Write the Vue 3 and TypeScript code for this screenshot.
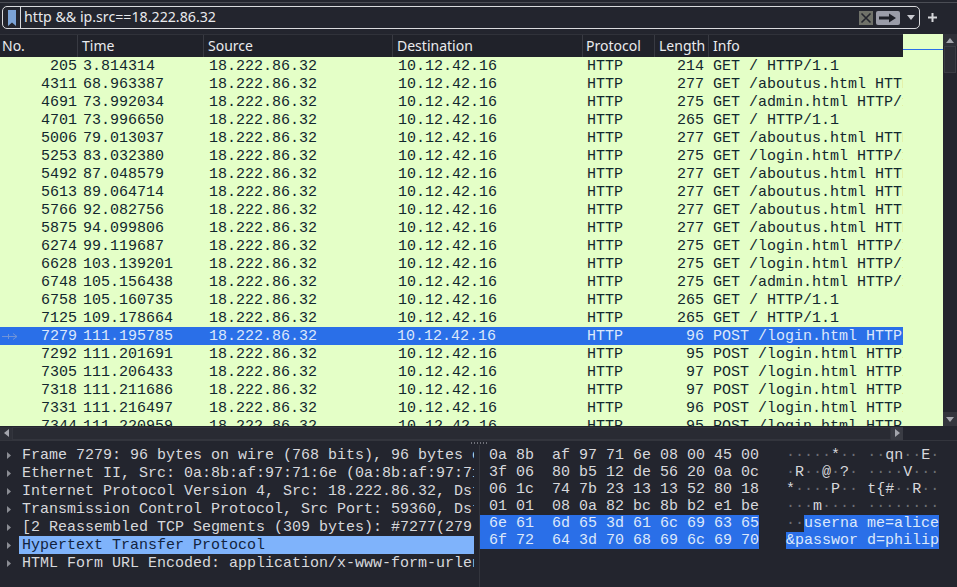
<script setup lang="ts">
interface Packet { no: number; time: string; len: number; info: string }
const about = 'GET /aboutus.html HTTP/1.1'
const admin = 'GET /admin.html HTTP/1.1'
const root = 'GET / HTTP/1.1'
const login = 'GET /login.html HTTP/1.1'
const post = 'POST /login.html HTTP/1.1'
const packets: Packet[] = [
  { no: 205, time: '3.814314', len: 214, info: root },
  { no: 4311, time: '68.963387', len: 277, info: about },
  { no: 4691, time: '73.992034', len: 275, info: admin },
  { no: 4701, time: '73.996650', len: 265, info: root },
  { no: 5006, time: '79.013037', len: 277, info: about },
  { no: 5253, time: '83.032380', len: 275, info: login },
  { no: 5492, time: '87.048579', len: 277, info: about },
  { no: 5613, time: '89.064714', len: 277, info: about },
  { no: 5766, time: '92.082756', len: 277, info: about },
  { no: 5875, time: '94.099806', len: 277, info: about },
  { no: 6274, time: '99.119687', len: 275, info: login },
  { no: 6628, time: '103.139201', len: 275, info: login },
  { no: 6748, time: '105.156438', len: 275, info: admin },
  { no: 6758, time: '105.160735', len: 265, info: root },
  { no: 7125, time: '109.178664', len: 265, info: root },
  { no: 7279, time: '111.195785', len: 96, info: post },
  { no: 7292, time: '111.201691', len: 95, info: post },
  { no: 7305, time: '111.206433', len: 97, info: post },
  { no: 7318, time: '111.211686', len: 97, info: post },
  { no: 7331, time: '111.216497', len: 96, info: post },
  { no: 7344, time: '111.220959', len: 95, info: post },
]
const details = [
  'Frame 7279: 96 bytes on wire (768 bits), 96 bytes captured',
  'Ethernet II, Src: 0a:8b:af:97:71:6e (0a:8b:af:97:71:6e), Dst',
  'Internet Protocol Version 4, Src: 18.222.86.32, Dst: 10.12.42.16',
  'Transmission Control Protocol, Src Port: 59360, Dst Port: 80',
  '[2 Reassembled TCP Segments (309 bytes): #7277(279), #7279(30)]',
  'Hypertext Transfer Protocol',
  'HTML Form URL Encoded: application/x-www-form-urlencoded',
]
interface HexRow { hex: string; plain: string; marked: string; sel: boolean }
const hexRows: HexRow[] = [
  { hex: '0a 8b  af 97 71 6e 08 00 45 00', plain: '·····*·· ··qn··E·', marked: '', sel: false },
  { hex: '3f 06  80 b5 12 de 56 20 0a 0c', plain: '·R··@·?· ····V···', marked: '', sel: false },
  { hex: '06 1c  74 7b 23 13 13 52 80 18', plain: '*····P·· t{#··R··', marked: '', sel: false },
  { hex: '01 01  08 0a 82 bc 8b b2 e1 be', plain: '···m···· ········', marked: '', sel: false },
  { hex: '6e 61  6d 65 3d 61 6c 69 63 65', plain: '··', marked: 'userna me=alice', sel: true },
  { hex: '6f 72  64 3d 70 68 69 6c 69 70', plain: '', marked: '&passwor d=philip', sel: true },
]
const chars = (s: string): string[] => Array.from(s)
</script>

<template>
  <div class="app">
    <div class="toolbar">
      <div class="filter">
        <svg class="bookmark" width="8" height="16" viewBox="0 0 8 16"><path d="M0 0H8V16L4 12.5L0 16Z" fill="#7ba3d6" /></svg>
        <span class="filter-text">http &amp;&amp; ip.src==18.222.86.32</span>
        <span class="clear">
          <svg width="14" height="14" viewBox="0 0 14 14"><path d="M2.5 2.5L11.5 11.5M11.5 2.5L2.5 11.5" stroke="#23252e" stroke-width="1.6" /></svg>
        </span>
        <span class="apply">
          <svg width="18" height="10" viewBox="0 0 18 10"><path d="M0 3.5H10V0.5L17 5L10 9.5V6.5H0Z" fill="#1d1f27" /></svg>
        </span>
        <svg class="drop" width="8" height="5" viewBox="0 0 8 5"><path d="M0 0H8L4 5Z" fill="#c9cad0" /></svg>
      </div>
      <svg class="plus" width="9" height="9" viewBox="0 0 9 9"><path d="M4.5 0V9M0 4.5H9" stroke="#d5d6da" stroke-width="2" /></svg>
    </div>

    <div class="list-area">
      <div class="list">
        <div class="grid head">
          <span class="hc">No.</span>
          <span class="hc">Time</span>
          <span class="hc">Source</span>
          <span class="hc">Destination</span>
          <span class="hc">Protocol</span>
          <span class="hc">Length</span>
          <span class="hc">Info</span>
        </div>
        <div class="rows">
          <div v-for="p in packets" :key="p.no" class="grid row" :class="{ selected: p.no === 7279 }">
            <svg v-if="p.no === 7279" class="mark" width="16" height="9" viewBox="0 0 16 9"><path d="M0 4.5H15M11 1.5L15 4.5L11 7.5M6.5 2V7" fill="none" stroke="#6f93d8" /></svg>
            <span class="num">{{ p.no }}</span>
            <span class="c c-time">{{ p.time }}</span>
            <span class="c">18.222.86.32</span>
            <span class="c">10.12.42.16</span>
            <span class="c">HTTP</span>
            <span class="len">{{ p.len }}</span>
            <span class="c">{{ p.info }}</span>
          </div>
        </div>
      </div>
      <div class="minimap"><div class="mini-line"></div></div>
      <div class="vscroll">
        <div class="vbtn"><svg width="8" height="5" viewBox="0 0 8 5"><path d="M0 5H8L4 0Z" fill="#a4a6ad" /></svg></div>
        <div class="vthumb"></div>
        <div class="vspace"></div>
        <div class="vbtn low"><svg width="8" height="5" viewBox="0 0 8 5"><path d="M0 0H8L4 5Z" fill="#a4a6ad" /></svg></div>
      </div>
    </div>

    <div class="hscroll">
      <div class="hbtn"><svg width="5" height="8" viewBox="0 0 5 8"><path d="M5 0V8L0 4Z" fill="#a4a6ad" /></svg></div>
      <div class="hthumb"></div>
      <div class="hbtn right"><svg width="5" height="8" viewBox="0 0 5 8"><path d="M0 0V8L5 4Z" fill="#a4a6ad" /></svg></div>
    </div>

    <div class="split-h"><span class="grip"></span></div>

    <div class="bottom">
      <div class="tree">
        <div v-for="(d, i) in details" :key="i" class="node" :class="{ on: i === 5 }">
          <svg class="tw" width="4" height="7" viewBox="0 0 4 7"><path d="M0 0V7L4 3.5Z" fill="#8b8d94" /></svg>
          <span class="node-text">{{ d }}</span>
        </div>
      </div>
      <div class="split-v"></div>
      <div class="bytes">
        <div v-for="(r, i) in hexRows" :key="i" class="hexrow">
          <span class="hex" :class="{ mark2: r.sel }">{{ r.hex }}</span>
          <span class="ascii"><template v-for="(ch, j) in chars(r.plain)" :key="j"><span :class="{ dot: ch === '·' }">{{ ch }}</span></template><span v-if="r.marked" class="mark2">{{ r.marked }}</span></span>
        </div>
      </div>
    </div>
  </div>
</template>

<style>
html, body { margin: 0; background: #23252e; }
</style>

<style scoped>
.app {
  width: 957px;
  height: 587px;
  overflow: hidden;
  background: #23252e;
  display: flex;
  flex-direction: column;
  font-family: "Liberation Mono", monospace;
  font-size: 15px;
  color: #d7d8dc;
}
.toolbar {
  box-sizing: border-box;
  flex: none;
  border-top: 1px solid #4b4d55;
  margin-top: 2px;
  height: 32px;
  padding: 3px 0 0 2px;
  display: flex;
  align-items: flex-start;
  background: #23252e;
}
.filter {
  width: 918px;
  height: 23px;
  box-sizing: border-box;
  border: 1px solid #d9dadd;
  border-radius: 5px;
  display: flex;
  align-items: center;
  padding-left: 5px;
}
.bookmark { flex: none; }
.filter-text {
  flex: 1;
  height: 100%;
  margin-left: 4px;
  padding-left: 3px;
  border-left: 1px solid #d9dadd;
  font-family: "Noto Sans", sans-serif;
  font-size: 14.2px;
  line-height: 20px;
  color: #e8e9ec;
}
.clear {
  width: 14px;
  height: 14px;
  background: #6f7169;
  display: flex;
  flex: none;
}
.apply {
  width: 24px;
  height: 14px;
  margin-left: 3px;
  background: #9a9ca8;
  border-radius: 2px;
  display: flex;
  align-items: center;
  justify-content: center;
  flex: none;
}
.drop { margin: 0 4px 0 7px; flex: none; }
.plus { margin: 7px 0 0 8px; flex: none; }
.list-area {
  height: 392px;
  flex: none;
  display: flex;
  overflow: hidden;
}
.list { width: 903px; flex: none; display: flex; flex-direction: column; overflow: hidden; }
.grid {
  display: grid;
  grid-template-columns: 78px 126px 189px 190px 72px 54px 194px;
}
.head {
  height: 23px;
  flex: none;
  background: #20222a;
  border-top: 1px solid #30323a;
  box-sizing: border-box;
  font-family: "Noto Sans", sans-serif;
  font-size: 14px;
  line-height: 22px;
  color: #eaebee;
}
.hc { padding-left: 2px; border-right: 1px solid #383a42; overflow: hidden; white-space: nowrap; }
.hc:nth-child(n+2) { padding-left: 4px; }
.hc:nth-child(5) { padding-left: 3px; }
.hc:last-child { border-right: 0; }
.rows { flex: 1; background: #e4ffc7; overflow: hidden; }
.row {
  position: relative;
  height: 18px;
  line-height: 19px;
  color: #12272e;
  white-space: pre;
}
.row.selected { background: #2a6fe8; color: #dce8fb; }
.mark { position: absolute; left: 2px; top: 5px; }
.num { text-align: right; padding-right: 1px; }
.len { text-align: right; padding-right: 5px; }
.c { padding-left: 5px; overflow: hidden; }
.c:nth-child(n+5) { padding-left: 4px; }
.minimap {
  width: 40px;
  flex: none;
  background: #e4ffc7;
  position: relative;
}
.mini-line {
  position: absolute;
  left: 0;
  right: 0;
  top: 15px;
  height: 1px;
  background: #2a6fe8;
}
.vscroll {
  width: 14px;
  flex: none;
  display: flex;
  flex-direction: column;
  background: #23252e;
}
.vbtn {
  height: 12px;
  flex: none;
  background: #2e3038;
  display: flex;
  align-items: center;
  justify-content: center;
}
.vbtn.low { height: 14px; background: #33353d; }
.vthumb { height: 27px; flex: none; margin: 0 1px; background: #2c2e36; border: 1px solid #3a3c44; box-sizing: border-box; }
.vspace { flex: 1; }
.hscroll {
  height: 14px;
  flex: none;
  display: flex;
  align-items: center;
  width: 903px;
  background: #23252e;
}
.hbtn {
  width: 12px;
  height: 13px;
  flex: none;
  background: #2e3038;
  display: flex;
  align-items: center;
  justify-content: center;
}
.hbtn.right { background: #3a3c44; }
.hthumb { flex: 1; height: 13px; background: #292b33; border: 1px solid #33353d; box-sizing: border-box; }
.split-h {
  height: 5px;
  flex: none;
  border-top: 1px solid #33353d;
  box-sizing: border-box;
  position: relative;
}
.grip {
  position: absolute;
  left: 471px;
  top: 1px;
  width: 17px;
  height: 2px;
  background: repeating-linear-gradient(90deg, #6f7179 0 1px, transparent 1px 3px);
}
.bottom { flex: 1; display: flex; min-height: 0; }
.tree { width: 474px; flex: none; padding-top: 1px; overflow: hidden; }
.node {
  height: 18px;
  display: flex;
  align-items: center;
  white-space: pre;
}
.tw { margin: 0 8px 0 7px; flex: none; }
.node-text { flex: 1; min-width: 0; height: 18px; padding-left: 3px; overflow: hidden; line-height: 20px; }
.node.on .node-text { background: #7fb3fb; color: #12233f; }
.split-v {
  width: 6px;
  flex: none;
  border-right: 1px solid #33353d;
  box-sizing: border-box;
}
.bytes { flex: 1; min-width: 0; padding-top: 2px; overflow: hidden; }
.hexrow { height: 17px; line-height: 17px; display: flex; white-space: pre; }
.hex { width: 270px; padding-left: 9px; flex: none; color: #d7d8dc; }
.ascii { margin-left: 27px; display: flex; }
.mark2 { background: #2a6fe8; color: #dce8fb; }
.dot { color: #6b6d74; }
</style>
